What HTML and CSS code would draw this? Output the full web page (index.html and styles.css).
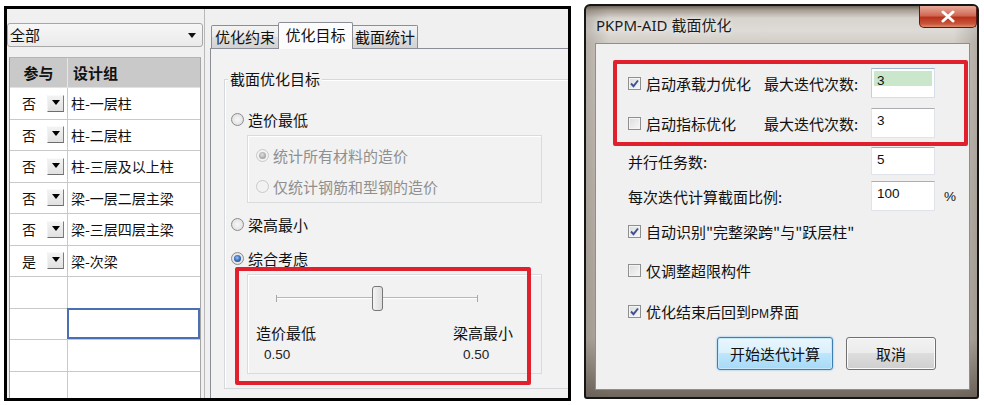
FILE: index.html
```html
<!DOCTYPE html>
<html>
<head>
<meta charset="utf-8">
<link rel="stylesheet" href="styles.css">
</head>
<body>
<div class="page">
  <div class="shot-l">
    <div class="lpane">
      <div class="combo"><span>全部</span><span class="combo-arr"></span></div>
      <div class="grid">
        <div class="ghead"><div class="gc1">参与</div><div class="gc2">设计组</div></div>
        <div class="grow"><div class="gc1"><span class="yn">否</span><span class="dd"><i></i></span></div><div class="gc2">柱-一层柱</div></div>
        <div class="grow"><div class="gc1"><span class="yn">否</span><span class="dd"><i></i></span></div><div class="gc2">柱-二层柱</div></div>
        <div class="grow"><div class="gc1"><span class="yn">否</span><span class="dd"><i></i></span></div><div class="gc2">柱-三层及以上柱</div></div>
        <div class="grow"><div class="gc1"><span class="yn">否</span><span class="dd"><i></i></span></div><div class="gc2">梁-一层二层主梁</div></div>
        <div class="grow"><div class="gc1"><span class="yn">否</span><span class="dd"><i></i></span></div><div class="gc2">梁-三层四层主梁</div></div>
        <div class="grow"><div class="gc1"><span class="yn">是</span><span class="dd"><i></i></span></div><div class="gc2">梁-次梁</div></div>
        <div class="grow"><div class="gc1"></div><div class="gc2"></div></div>
        <div class="grow"><div class="gc1"></div><div class="gc2 cur"></div></div>
        <div class="grow"><div class="gc1"></div><div class="gc2"></div></div>
        <div class="grow"><div class="gc1"></div><div class="gc2"></div></div>
      </div>
    </div>
    <div class="tabs">
      <div class="tabbar">
        <div class="tab t1">优化约束</div>
        <div class="tab sel">优化目标</div>
        <div class="tab t3">截面统计</div>
      </div>
      <div class="tabpanel">
        <div class="gb">
          <div class="gb-title">截面优化目标</div>
          <div class="opt o1"><span class="radio"></span>造价最低</div>
          <div class="subbox b1">
            <div class="opt sub dis"><span class="radio on dis"></span>统计所有材料的造价</div>
            <div class="opt sub dis"><span class="radio dis"></span>仅统计钢筋和型钢的造价</div>
          </div>
          <div class="opt o2"><span class="radio"></span>梁高最小</div>
          <div class="opt o3"><span class="radio on"></span>综合考虑</div>
          <div class="subbox b2">
            <div class="slider"><span class="thumb"></span></div>
            <div class="scales">
              <div class="scol sc1"><div class="slab">造价最低</div><div class="sval">0.50</div></div>
              <div class="scol sc2"><div class="slab">梁高最小</div><div class="sval">0.50</div></div>
            </div>
          </div>
        </div>
      </div>
    </div>
  </div>

  <div class="shot-r">
    <div class="titlebar">
      <span class="ttl">PKPM-AID 截面优化</span>
      <span class="close"><svg width="16" height="13" viewBox="0 0 16 13"><path d="M3 2 L13 11 M13 2 L3 11" stroke="#fff" stroke-width="3" stroke-linecap="round"/></svg></span>
    </div>
    <div class="client">
      <div class="drow h40">
        <span class="cbl w136"><span class="chk on"><svg width="11" height="11" viewBox="0 0 11 11"><path d="M2 5.5 L4.5 8.2 L9 2.5" fill="none" stroke="#3d5295" stroke-width="1.9"/></svg></span><span>启动承载力优化</span></span>
        <span class="w107">最大迭代次数:</span>
        <span class="inp green h30">3</span>
      </div>
      <div class="drow h40">
        <span class="cbl w136"><span class="chk"></span><span>启动指标优化</span></span>
        <span class="w107">最大迭代次数:</span>
        <span class="inp h30">3</span>
      </div>
      <div class="drow h36">
        <span class="w243">并行任务数:</span>
        <span class="inp h28">5</span>
      </div>
      <div class="drow h34">
        <span class="w243">每次迭代计算截面比例:</span>
        <span class="inp h30">100</span>
        <span class="pct">%</span>
      </div>
      <div class="drow h36">
        <span class="cbl"><span class="chk on"><svg width="11" height="11" viewBox="0 0 11 11"><path d="M2 5.5 L4.5 8.2 L9 2.5" fill="none" stroke="#3d5295" stroke-width="1.9"/></svg></span><span>自动识别"完整梁跨"与"跃层柱"</span></span>
      </div>
      <div class="drow h42">
        <span class="cbl"><span class="chk"></span><span>仅调整超限构件</span></span>
      </div>
      <div class="drow h40">
        <span class="cbl"><span class="chk on"><svg width="11" height="11" viewBox="0 0 11 11"><path d="M2 5.5 L4.5 8.2 L9 2.5" fill="none" stroke="#3d5295" stroke-width="1.9"/></svg></span><span>优化结束后回到<span class="pm">PM</span>界面</span></span>
      </div>
      <div class="btns">
        <span class="btn def">开始迭代计算</span>
        <span class="btn">取消</span>
      </div>
    </div>
  </div>

  <div class="redbox red-l"></div>
  <div class="redbox red-r"></div>
</div>
</body>
</html>
```

FILE: styles.css
```css
* { box-sizing: border-box; margin: 0; padding: 0; }
html, body { width: 984px; height: 405px; overflow: hidden; background: #fff; }
body { font-family: "Noto Sans CJK SC", "Noto Sans", sans-serif; font-size: 15px; color: #111; }

.page { position: relative; display: flex; align-items: flex-start; width: 984px; height: 405px; }

/* ---------- left screenshot ---------- */
.shot-l {
  margin: 6px 0 0 4px; width: 567px; height: 395px;
  border: 3px solid #000; background: #f0f0f0;
  display: flex; overflow: hidden; flex: none;
}
.lpane { width: 198px; flex: none; padding-top: 14px; display: flex; flex-direction: column; border-right: 1px solid #b9b9b9; }
.combo {
  width: 196px; height: 24px; border: 1px solid #a7a7a7; border-radius: 3px;
  background: linear-gradient(#f7f7f7, #eaeaea);
  display: flex; align-items: center; justify-content: space-between;
  padding: 0 6px 0 2px; line-height: 20px; flex: none;
}
.combo-arr { width: 0; height: 0; border-left: 4px solid transparent; border-right: 4px solid transparent; border-top: 5px solid #111; }
.grid {
  margin: 10px 0 0 2px; width: 192px; flex: 1;
  border-left: 1px solid #9f9f9f; border-top: 1px solid #b5b5b5; border-right: 1px solid #a5a5a5;
  background: #fff; overflow: hidden;
}
.ghead { display: flex; height: 30px; background: #c9c9c9; font-weight: bold; line-height: 30px; border-bottom: 1px solid #e2e2e2; }
.ghead .gc1 { width: 58px; text-align: center; border-right: 1px solid #e6e6e6; }
.ghead .gc2 { flex: 1; padding-left: 5px; }
.grow { display: flex; height: 31.5px; border-bottom: 1px solid #c9c9c9; font-size: 14px; }
.grow .gc1 { width: 58px; border-right: 1px solid #c9c9c9; display: flex; align-items: center; padding-left: 12px; }
.grow .gc2 { flex: 1; padding-left: 3px; line-height: 30px; }
.grow .gc2.cur { box-shadow: inset 0 0 0 2px #4b6fb2; margin: -1px 0 0 -1px; }
.yn { width: 25px; }
.dd {
  width: 17px; height: 17px; display: flex; justify-content: center; padding-top: 4px;
  background: linear-gradient(#f3f3f3, #e1e1e1);
  border: 1px solid; border-color: #fafafa #7d7d7d #6d6d6d #f2f2f2;
}
.dd i { width: 0; height: 0; border-left: 4px solid transparent; border-right: 4px solid transparent; border-top: 5px solid #000; }

.tabs { flex: 1; margin-left: 5px; display: flex; flex-direction: column; min-width: 0; }
.tabbar { height: 39px; display: flex; align-items: flex-end; padding-left: 1px; position: relative; z-index: 1; flex: none; }
.tab {
  height: 23px; border: 1px solid #8b8e96; border-bottom: none;
  background: linear-gradient(#f3f3f3, #ebebeb 50%, #dedede 50%, #d2d2d2);
  line-height: 21px; text-align: center; color: #111;
}
.tab.t1 { width: 68px; border-radius: 2px 0 0 0; }
.tab.sel { width: 75px; height: 27px; margin: 0 -1px -1px -1px; background: #fcfcfc; line-height: 24px; border-radius: 2px 2px 0 0; position: relative; }
.tab.t3 { width: 66px; border-radius: 0 2px 0 0; }
.tabpanel {
  flex: 1; border-top: 1px solid #8b8e96; border-left: 1px solid #8b8e96;
  padding: 30px 0 0 13px; overflow: hidden; background: #f2f2f2;
}
.gb { width: 400px; border: 1px solid #d5d9dd; box-shadow: inset 1px 1px 0 #fff; padding: 0 0 14px 6px; }
.gb-title { width: max-content; margin: -11px 0 0 -3px; padding: 0 2px; background: #f2f2f2; line-height: 20px; }
.opt { display: flex; align-items: center; gap: 4px; }
.opt.o1 { height: 30px; margin-top: 15px; }
.opt.o2 { height: 35px; margin-top: 4px; }
.opt.o3 { height: 32px; }
.opt.sub { height: 31px; }
.opt.dis { color: #8f8f8f; }
.subbox { margin-left: 16px; width: 295px; border: 1px solid #d9dcdf; box-shadow: inset 1px 1px 0 #fff; }
.subbox.b1 { margin-top: 1px; padding: 4px 0 0 8px; }
.subbox.b2 { padding: 0 0 8px 8px; }

.radio {
  width: 13px; height: 13px; border-radius: 50%; flex: none; position: relative;
  border: 1px solid #8a8c8e;
  background: radial-gradient(circle at 50% 50%, #f7f7f7 0, #e6e6e6 60%, #d2d2d2 100%);
}
.radio.dis { border-color: #c7c9cb; background: #f2f2f2; }
.radio.on::after {
  content: ""; position: absolute; left: 2px; top: 2px; width: 7px; height: 7px; border-radius: 50%;
  background: radial-gradient(circle at 45% 40%, #9fc4f2 0, #2f63b3 55%, #1c3f7f 100%);
}
.radio.on.dis::after { background: radial-gradient(circle at 45% 40%, #e2e2e2 0, #a9a9a9 60%, #8f8f8f 100%); }

.slider {
  margin: 11px 0 0 20px; width: 202px; height: 25px; display: flex; justify-content: center;
  background:
    linear-gradient(#a8a8a8, #a8a8a8) left center / 1px 7px no-repeat,
    linear-gradient(#a8a8a8, #a8a8a8) right center / 1px 7px no-repeat,
    linear-gradient(transparent 11px, #b7b7b7 11px, #b7b7b7 12px, #ffffff 12px, #ffffff 13px, transparent 13px);
}
.thumb {
  width: 11px; height: 25px; border: 1px solid #767676; border-radius: 3px;
  background: linear-gradient(90deg, #f4f4f4, #dcdcdc);
}
.scales { display: flex; margin-top: 10px; }
.scol.sc1 { width: 197px; }
.slab { height: 24px; line-height: 24px; }
.sval { height: 20px; line-height: 20px; font-family: "Liberation Sans", sans-serif; font-size: 13.5px; color: #222; }
.sc1 .sval { padding-left: 8px; }
.sc2 .sval { padding-left: 10px; }

/* ---------- right screenshot (dialog) ---------- */
.shot-r {
  margin: 4px 0 0 13px; width: 395px; height: 395px; flex: none;
  border: 2px solid #161616; border-radius: 6px 6px 3px 3px;
  display: flex; flex-direction: column; overflow: hidden;
  background:
    linear-gradient(90deg, rgba(90,80,70,0.25), rgba(255,255,255,0) 6%, rgba(255,255,255,0) 94%, rgba(90,80,70,0.25)),
    linear-gradient(180deg, #6d655c 0, #a69d92 4px, #d7d3cd 12px, #dedbd7 24px, #d2cdc6 37px, #c5bfb7 45%, #b8b1a8 85%, #6f675e 100%);
}
.titlebar { height: 37px; display: flex; justify-content: space-between; padding-left: 10px; flex: none; }
.ttl { align-self: center; font-family: "Noto Sans", "Noto Sans CJK SC", sans-serif; font-size: 15px; color: #1b1b1b; text-shadow: 0 0 6px rgba(255,255,255,0.9); line-height: 20px; margin-top: 1px; }
.close {
  width: 58px; height: 22px; border: 1px solid #5b1a14; border-top: none;
  border-radius: 0 0 5px 5px;
  background: linear-gradient(#e9a99a, #d06a55 45%, #b8321c 55%, #c9553a 85%, #de8b6f);
  display: flex; align-items: center; justify-content: center;
}
.client {
  flex: 1; margin: 0 7px 7px 9px; background: #f0f0f0; border: 1px solid #8e8e8e;
  padding: 19px 33px 0 32px;
}
.drow { display: flex; align-items: center; }
.h40 { height: 40px; } .h36 { height: 36px; } .h34 { height: 34px; } .h42 { height: 42px; }
.cbl { display: flex; align-items: center; gap: 5px; }
.w136 { width: 136px; flex: none; }
.w107 { width: 107px; flex: none; }
.w243 { width: 243px; flex: none; }
.chk {
  width: 13px; height: 13px; border: 1px solid #8e8f8f; flex: none;
  background: linear-gradient(135deg, #dcdcdc, #f8f8f8);
  box-shadow: inset 0 0 0 1px #f4f4f4;
  display: flex; align-items: center; justify-content: center;
}
.inp {
  width: 64px; background: #fff; border: 1px solid #e1e3ea; border-top-color: #abadb3;
  font-family: "Liberation Sans", sans-serif; font-size: 13.5px; color: #111;
  padding: 3px 0 0 5px; line-height: 18px; flex: none;
}
.inp.h30 { height: 30px; } .inp.h28 { height: 28px; }
.inp.green { background: linear-gradient(#cbe7cb 0, #cbe7cb 62%, #fff 62%); box-shadow: inset 0 0 0 2px #fff; border-color: #9fb6cf #d5deea #d5deea #c2cfdf; }
.pct { margin-left: 9px; font-family: "Liberation Sans", sans-serif; font-size: 13.5px; }
.pm { font-family: "Liberation Sans", sans-serif; font-size: 12px; }
.btns { display: flex; justify-content: flex-end; gap: 13px; margin-top: 6px; }
.btn {
  height: 33px; width: 90px; border: 1px solid #707070; border-radius: 3px;
  background: linear-gradient(#f2f2f2, #ebebeb 50%, #dddddd 50%, #cfcfcf);
  box-shadow: inset 0 0 0 1px #fbfbfb;
  display: flex; align-items: center; justify-content: center; line-height: 20px;
}
.btn.def {
  width: 116px; border-color: #3c7fb1;
  background: linear-gradient(#eaf6fd, #d9f0fc 50%, #bee6fd 50%, #a7d9f5);
  box-shadow: inset 0 0 0 1px #c6e8f9, 0 0 2px #6fb4e4;
}

/* ---------- red highlight overlays ---------- */
.redbox { position: absolute; border: 4px solid #e0212d; border-radius: 2px; }
.red-l { left: 235px; top: 267px; width: 296px; height: 118px; }
.red-r { left: 613px; top: 60px; width: 355px; height: 86px; }
```
